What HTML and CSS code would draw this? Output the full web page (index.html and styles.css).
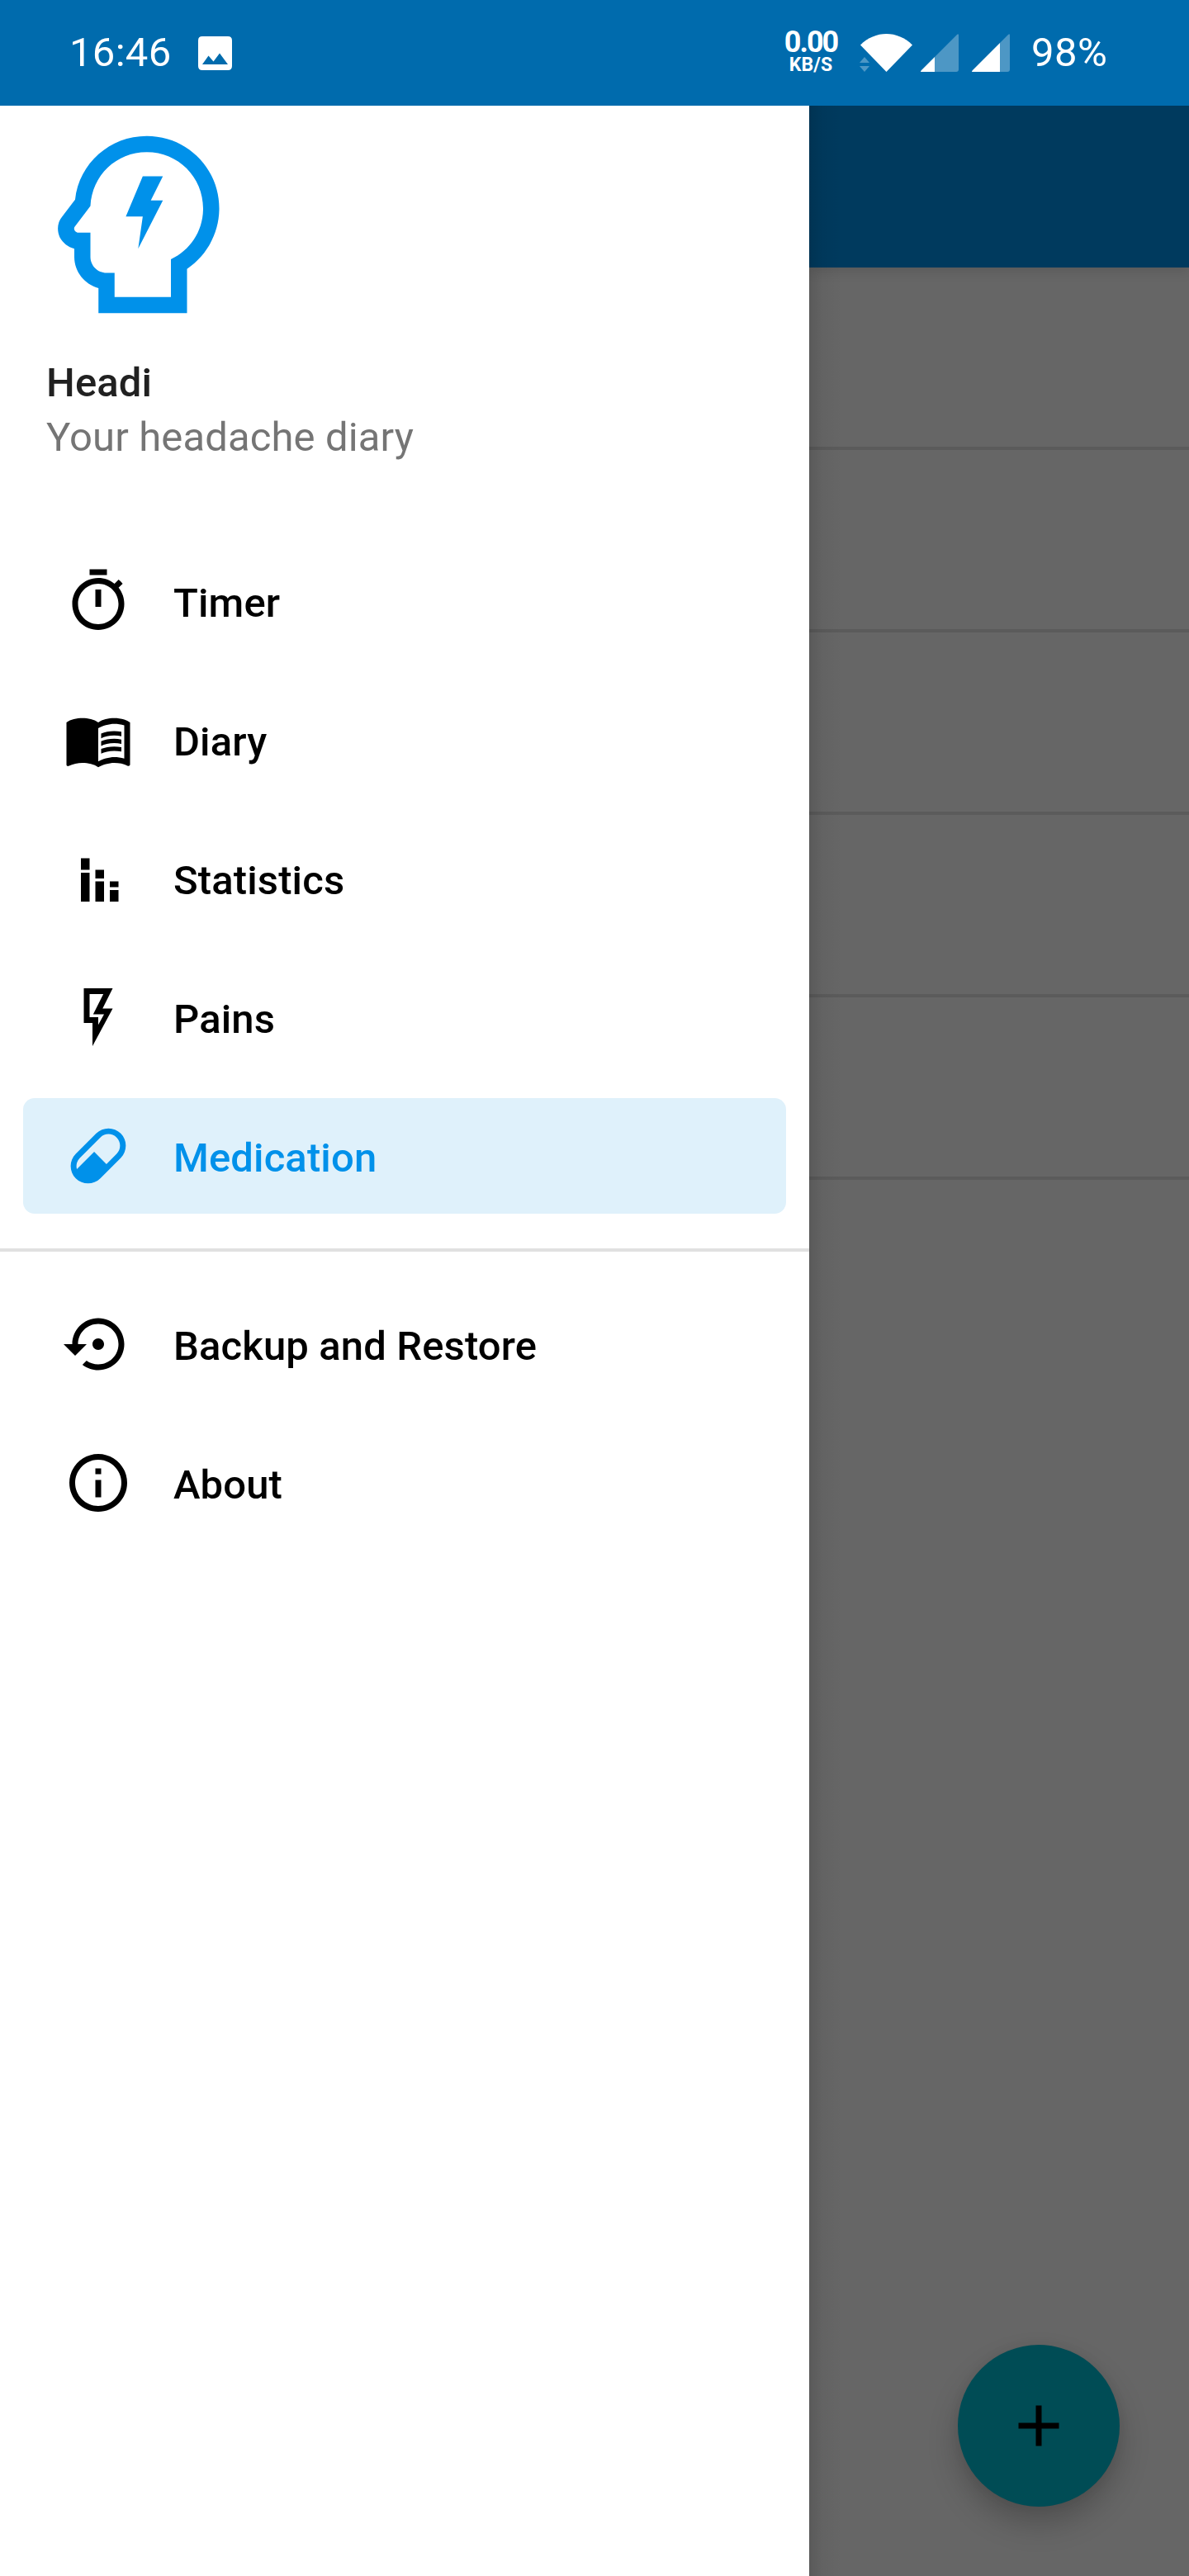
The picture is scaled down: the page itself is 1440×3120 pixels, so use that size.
FILE: index.html
```html
<!DOCTYPE html>
<html lang="en">
<head>
<meta charset="utf-8">
<title>Headi</title>
<link rel="stylesheet" href="styles.css">
</head>
<body>
<header class="status">
  <span class="clock">16:46</span>
  <svg class="photo" viewBox="0 0 41 41"><path fill-rule="evenodd" d="M5 0H36Q41 0 41 5V36Q41 41 36 41H5Q0 41 0 36V5Q0 0 5 0ZM5 34H36L26 20.500L18.500 30.500L12.500 23.500Z"/></svg>
  <div class="speed"><b class="rate">0.00</b><b class="unit">KB/S</b></div>
  <svg class="wifi" viewBox="0 0 64 46"><path d="M1 13.500C19 -4.500 46 -4.500 64 13.500L32.500 46Z"/><path class="dim" d="M0 35L6 28L12 35ZM0 39H12L6 46Z"/></svg>
  <svg class="signal" viewBox="0 0 46 46"><path class="dim" d="M17 28L44 1Q46 -1 46 2V43Q46 46 43 46H17Z"/><path d="M17 28V46H1Q-1 46 1 44Z"/></svg>
  <svg class="signal second" viewBox="0 0 46 46"><path class="dim" d="M34 11L44 1Q46 -1 46 2V43Q46 46 43 46H34Z"/><path d="M34 11V46H1Q-1 46 1 44Z"/></svg>
  <span class="battery">98%</span>
</header>
<main class="screen">
  <aside class="drawer">
    <div class="profile">
      <svg class="logo" viewBox="0 0 24 24"><path d="M13 1C8.400 1 4.600 4.400 4.100 8.900L2.500 11C1.900 11.700 1.800 12.700 2.200 13.600C2.600 14.300 3.200 14.800 4 15V16C4 17.900 5.300 19.400 7 19.900V23H18V17.500C20.500 15.800 22 13 22 10C22 5 18 1 13 1M16 16.300V21H9V18H8C6.900 18 6 17.100 6 16V13H4.500C4.100 13 3.800 12.500 4.100 12.200L6 9.700C6.200 5.900 9.200 3 13 3C16.900 3 20 6.100 20 10C20 12.800 18.400 15.200 16 16.300M12.500 6H15L13.500 9H15L11.930 15L12.500 11H10.400Z"/></svg>
      <h1 class="name">Headi</h1>
      <p class="tagline">Your headache diary</p>
    </div>
    <nav class="menu">
      <a class="item"><svg class="icon" viewBox="0 0 24 24"><path d="M15 1H9v2h6V1zm-4 13h2V8h-2v6zm8.030-6.610l1.420-1.420c-.43-.51-.9-.99-1.410-1.410l-1.420 1.420C16.070 4.740 14.120 4 12 4c-4.970 0-9 4.030-9 9s4.020 9 9 9 9-4.030 9-9c0-2.120-.74-4.070-1.970-5.610zM12 20c-3.870 0-7-3.130-7-7s3.130-7 7-7 7 3.130 7 7-3.130 7-7 7z"/></svg><span>Timer</span></a>
      <a class="item"><svg class="icon" viewBox="0 0 24 24"><path d="M21 5c-1.110-.35-2.330-.5-3.500-.5-1.950 0-4.050.4-5.500 1.500-1.450-1.100-3.550-1.500-5.500-1.500S2.450 4.900 1 6v14.650c0 .25.25.5.5.5.1 0 .15-.05.25-.05C3.100 20.450 5.050 20 6.500 20c1.950 0 4.050.4 5.500 1.500 1.350-.85 3.800-1.500 5.500-1.500 1.650 0 3.350.3 4.750 1.050.1.050.15.050.25.050.25 0 .5-.25.5-.5V6c-.6-.45-1.250-.75-2-1zm0 13.500c-1.100-.35-2.300-.5-3.500-.5-1.700 0-4.150.65-5.500 1.500V8c1.350-.85 3.800-1.500 5.500-1.500 1.200 0 2.400.15 3.500.5v11.500z"/><path d="M17.500 10.500c.88 0 1.730.09 2.500.26V9.240c-.79-.15-1.640-.24-2.500-.24-1.700 0-3.240.29-4.500.83v1.660c1.130-.64 2.700-.99 4.500-.99zM13 12.490v1.660c1.130-.64 2.700-.99 4.500-.99.88 0 1.730.09 2.500.26V11.900c-.79-.15-1.640-.24-2.500-.24-1.700 0-3.240.3-4.500.83zM17.500 14.330c-1.700 0-3.240.29-4.500.83v1.660c1.130-.64 2.700-.99 4.500-.99.88 0 1.730.09 2.500.26v-1.520c-.79-.16-1.640-.24-2.500-.24z"/></svg><span>Diary</span></a>
      <a class="item"><svg class="icon" viewBox="0 0 24 24"><path d="M6 5h3v4H6zM6 10h3v10H6zM11 9h3v3h-3zM11 13h3v7h-3zM16 13h3v2h-3zM16 16h3v4h-3z"/></svg><span>Statistics</span></a>
      <a class="item"><svg class="icon" viewBox="0 0 24 24"><path d="M7 2H17L13.500 9H17L10 22V14H7V2M9 4V12H12V14.660L14 11H10.240L13.760 4H9Z"/></svg><span>Pains</span></a>
      <a class="item active"><svg class="icon" viewBox="0 0 24 24"><path d="M4.220 11.290L11.290 4.220C13.640 1.880 17.430 1.880 19.780 4.220C22.120 6.560 22.120 10.360 19.780 12.710L12.710 19.780C10.360 22.120 6.560 22.120 4.220 19.780C1.880 17.430 1.880 13.640 4.220 11.290M5.640 12.710C4.590 13.750 4.240 15.240 4.600 16.570L10.590 10.590L14.830 14.830L18.360 11.290C19.930 9.730 19.930 7.200 18.360 5.640C16.800 4.070 14.270 4.070 12.710 5.640L5.640 12.710Z"/></svg><span>Medication</span></a>
    </nav>
    <nav class="menu extra">
      <a class="item"><svg class="icon" viewBox="0 0 24 24"><path d="M14 12c0-1.100-.9-2-2-2s-2 .9-2 2 .9 2 2 2 2-.9 2-2zm-2-9c-4.970 0-9 4.030-9 9H0l4 4 4-4H5c0-3.870 3.130-7 7-7s7 3.130 7 7-3.130 7-7 7c-1.510 0-2.910-.49-4.060-1.300l-1.420 1.440C8.040 20.300 9.940 21 12 21c4.970 0 9-4.030 9-9s-4.030-9-9-9z"/></svg><span>Backup and Restore</span></a>
      <a class="item"><svg class="icon" viewBox="0 0 24 24"><path d="M11 7h2v2h-2zm0 4h2v6h-2zm1-9C6.480 2 2 6.480 2 12s4.480 10 10 10 10-4.480 10-10S17.520 2 12 2zm0 18c-4.410 0-8-3.590-8-8s3.590-8 8-8 8 3.590 8 8-3.590 8-8 8z"/></svg><span>About</span></a>
    </nav>
  </aside>
  <section class="content">
    <div class="appbar"></div>
    <div class="row"></div>
    <div class="row"></div>
    <div class="row"></div>
    <div class="row"></div>
    <div class="row"></div>
    <div class="fab"><svg class="icon" viewBox="0 0 24 24"><path d="M19 13h-6v6h-2v-6H5v-2h6V5h2v6h6z"/></svg></div>
  </section>
</main>
</body>
</html>
```
FILE: styles.css
```css
* { box-sizing: border-box; }
body {
  margin: 0;
  width: 1440px;
  height: 3120px;
  display: flex;
  flex-direction: column;
  overflow: hidden;
  font: 400 49px/57px Roboto, sans-serif;
  letter-spacing: .12px;
  background: #fff;
}
svg { display: block; flex: none; fill: currentColor; }

.status {
  height: 128px;
  flex: none;
  display: flex;
  align-items: flex-start;
  padding-left: 84px;
  background: #006bad;
  color: #fff;
}
.clock { width: 156px; padding-top: 35px; letter-spacing: .3px; }
.photo { width: 41px; height: 41px; margin-top: 44px; }
.speed {
  width: 80px;
  margin: 31px 0 0 661px;
  display: flex;
  flex-direction: column;
  align-items: center;
}
.rate { font-size: 36px; line-height: 40px; letter-spacing: -2px; }
.unit { font-size: 23px; line-height: 16px; }
.wifi { width: 64px; height: 46px; margin: 41px 0 0 19px; }
.signal { width: 46px; height: 46px; margin: 41px 0 0 10px; }
.second { margin-left: 16px; }
.dim { opacity: .3; }
.battery { margin-left: 26px; padding-top: 35px; letter-spacing: .4px; }

.screen { flex: 1; display: flex; }
.drawer {
  width: 980px;
  flex: none;
  background: #fff;
}
.profile { height: 502px; padding: 27px 51px 0; }
.logo { width: 234px; height: 234px; color: #0091ea; }
.name, .tagline { margin: 0 0 0 5px; }
.name { margin-top: 46px; font-size: 49px; font-weight: 500; color: #212121; }
.tagline { margin-top: 9px; color: #757575; }
.menu {
  display: flex;
  flex-direction: column;
  gap: 28px;
  padding: 28px 28px 42px;
}
.extra { border-top: 4px solid #e0e0e0; padding-top: 42px; }
.item {
  height: 140px;
  display: flex;
  align-items: center;
  gap: 49px;
  padding-left: 49px;
  border-radius: 14px;
  font-weight: 500;
  color: #000;
}
.item span { padding-top: 5px; }
.active { background: #dff1fb; color: #0091ea; }
.icon { width: 84px; height: 84px; }

.content {
  position: relative;
  flex: 1;
  overflow: hidden;
  background: #666;
}
.content::before {
  content: "";
  position: absolute;
  inset: 0 auto 0 0;
  width: 40px;
  background: linear-gradient(to right, rgba(0, 0, 0, .12), rgba(0, 0, 0, .035) 40%, transparent);
}
.appbar {
  height: 196px;
  background: #003a5e;
  box-shadow: 0 4px 14px rgba(0, 0, 0, .13);
}
.row { height: 221px; border-bottom: 4px solid #5b5b5b; }
.fab {
  position: absolute;
  right: 84px;
  bottom: 84px;
  width: 196px;
  height: 196px;
  display: flex;
  align-items: center;
  justify-content: center;
  border-radius: 50%;
  background: #004c55;
  color: #000;
  box-shadow: 0 20px 36px rgba(0, 0, 0, .22), 0 0 14px rgba(0, 0, 0, .06);
}
```
